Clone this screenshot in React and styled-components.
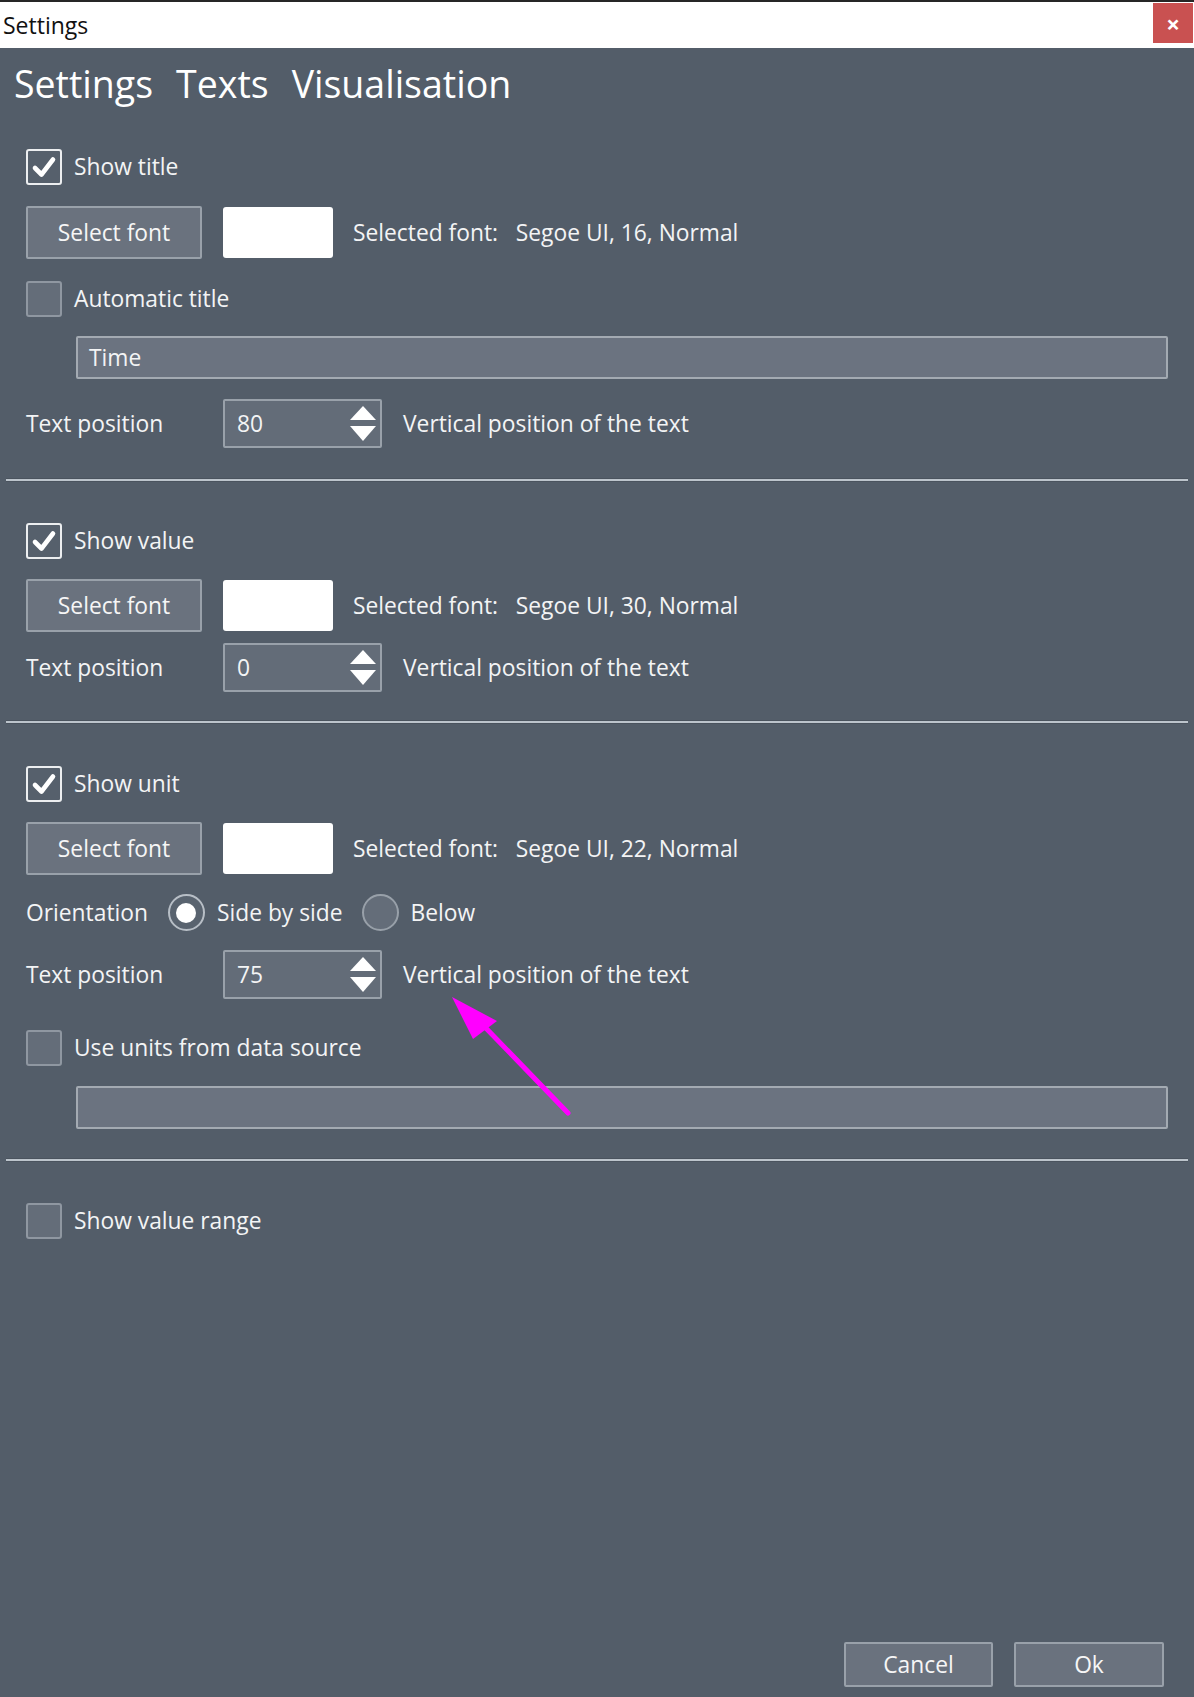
import React from "react";
import styled, { createGlobalStyle } from "styled-components";

const GlobalStyle = createGlobalStyle`
  html, body {
    margin: 0;
    padding: 0;
    background: #535d69;
  }
  body {
    font-family: "Open Sans", "Noto Sans", sans-serif;
  }
`;

const Window = styled.div`
  position: relative;
  display: flex;
  flex-direction: column;
  width: 1194px;
  min-height: 1697px;
  background: #535d69;
  color: #f3f4f5;
  font-size: 22.8px;
  box-sizing: border-box;
`;

const TitleBar = styled.div`
  display: flex;
  align-items: center;
  justify-content: space-between;
  height: 46px;
  border-top: 2px solid #262626;
  background: #ffffff;
  color: #111;
  font-size: 23px;
  padding-left: 3px;
`;

const CloseBtn = styled.div`
  display: flex;
  align-items: center;
  justify-content: center;
  width: 40px;
  height: 40px;
  margin-right: 1px;
  margin-top: -4px;
  background: #c95151;
  color: #fff;
  font-size: 24px;
  font-weight: 700;
`;

const Tabs = styled.div`
  display: flex;
  align-items: center;
  gap: 23px;
  height: 70px;
  padding-left: 14px;
  font-size: 37.5px;
  color: #ffffff;
`;

const Content = styled.div`
  display: flex;
  flex-direction: column;
  padding: 30px 6px 0;
`;

const Row = styled.div`
  display: flex;
  align-items: center;
  height: ${(p) => p.$h || 37}px;
  margin-top: ${(p) => p.$mt || 0}px;
  padding-left: 20px;
`;

const Box = styled.span`
  display: flex;
  align-items: center;
  justify-content: center;
  width: 36px;
  height: 36px;
  box-sizing: border-box;
  border-radius: 3px;
  border: 2px solid ${(p) => (p.$checked ? "#eceef0" : "#8f97a1")};
  background: ${(p) => (p.$checked ? "#56606c" : "#646d79")};
  margin-right: 12px;
`;

const Checkbox = ({ checked, label }) => (
  <>
    <Box $checked={checked}>
      {checked && (
        <svg width="26" height="26" viewBox="0 0 26 26">
          <path
            d="M4 14 L10.5 20.5 L22 5.5"
            fill="none"
            stroke="#ffffff"
            strokeWidth="4.6"
            strokeLinecap="round"
            strokeLinejoin="round"
          />
        </svg>
      )}
    </Box>
    <span>{label}</span>
  </>
);

const Button = styled.div`
  display: flex;
  align-items: center;
  justify-content: center;
  width: ${(p) => p.$w || 176}px;
  height: ${(p) => p.$h || 53}px;
  box-sizing: border-box;
  border: 2px solid #99a1aa;
  border-radius: 2px;
  background: #6a727e;
  color: #f6f6f6;
`;

const Swatch = styled.div`
  width: 110px;
  height: 51px;
  margin-left: 21px;
  border-radius: 3px;
  background: #ffffff;
`;

const FontInfo = styled.span`
  margin-left: 20px;
  white-space: pre;
`;

const TextBox = styled.div`
  display: flex;
  align-items: center;
  height: 43px;
  margin: ${(p) => p.$mt || 0}px 20px 0 70px;
  padding-left: 11px;
  box-sizing: border-box;
  border: 2px solid #a3aab2;
  border-radius: 2px;
  background: #6b7380;
`;

const Label = styled.span`
  width: 197px;
`;

const Spin = styled.div`
  display: flex;
  align-items: center;
  justify-content: space-between;
  width: 159px;
  height: 49px;
  box-sizing: border-box;
  padding: 0 4px 0 12px;
  border: 2px solid #99a1aa;
  border-radius: 2px;
  background: #636c78;
`;

const Arrows = styled.div`
  display: flex;
  flex-direction: column;
  gap: 6px;
`;

const Desc = styled.span`
  margin-left: 21px;
`;

const SpinRow = ({ value, mt }) => (
  <Row $h={49} $mt={mt}>
    <Label>Text position</Label>
    <Spin>
      <span>{value}</span>
      <Arrows>
        <svg width="26" height="14" viewBox="0 0 26 14">
          <polygon points="13,0 26,14 0,14" fill="#ffffff" />
        </svg>
        <svg width="26" height="15" viewBox="0 0 26 15">
          <polygon points="0,0 26,0 13,15" fill="#ffffff" />
        </svg>
      </Arrows>
    </Spin>
    <Desc>Vertical position of the text</Desc>
  </Row>
);

const FontRow = ({ size, mt }) => (
  <Row $h={53} $mt={mt}>
    <Button>Select font</Button>
    <Swatch />
    <FontInfo>{`Selected font:   Segoe UI, ${size}, Normal`}</FontInfo>
  </Row>
);

const Separator = styled.div`
  height: 2px;
  margin: ${(p) => p.$mt}px 0 ${(p) => p.$mb}px;
  background: #bcc4cc;
  border-top: 1px solid #4a535e;
  border-bottom: 1px solid #4a535e;
`;

const Radio = styled.span`
  display: flex;
  align-items: center;
  justify-content: center;
  width: 37px;
  height: 37px;
  box-sizing: border-box;
  border-radius: 50%;
  border: 2px solid ${(p) => (p.$checked ? "#b7bec6" : "#98a0a9")};
  background: ${(p) => (p.$checked ? "#59636f" : "#646d79")};
  margin: 0 12px 0 ${(p) => p.$ml}px;

  &::after {
    content: "";
    display: ${(p) => (p.$checked ? "block" : "none")};
    width: 20px;
    height: 20px;
    border-radius: 50%;
    background: #ffffff;
  }
`;

const Footer = styled.div`
  display: flex;
  justify-content: flex-end;
  gap: 21px;
  margin-top: auto;
  padding: 0 30px 10px 0;
`;

const Annotation = styled.svg`
  position: absolute;
  left: 0;
  top: 0;
  pointer-events: none;
`;

export default function App() {
  return (
    <>
      <GlobalStyle />
      <Window>
        <TitleBar>
          <span>Settings</span>
          <CloseBtn>×</CloseBtn>
        </TitleBar>
        <Tabs>
          <span>Settings</span>
          <span>Texts</span>
          <span>Visualisation</span>
        </Tabs>
        <Content>
          <Row>
            <Checkbox checked label="Show title" />
          </Row>
          <FontRow size={16} mt={21} />
          <Row $mt={21}>
            <Checkbox label="Automatic title" />
          </Row>
          <TextBox $mt={19}>Time</TextBox>
          <SpinRow value="80" mt={20} />
          <Separator $mt={30} $mb={40} />

          <Row>
            <Checkbox checked label="Show value" />
          </Row>
          <FontRow size={30} mt={20} />
          <SpinRow value="0" mt={11} />
          <Separator $mt={28} $mb={41} />

          <Row>
            <Checkbox checked label="Show unit" />
          </Row>
          <FontRow size={22} mt={20} />
          <Row $mt={19}>
            <span>Orientation</span>
            <Radio $checked $ml={20} />
            <span>Side by side</span>
            <Radio $ml={19} />
            <span>Below</span>
          </Row>
          <SpinRow value="75" mt={19} />
          <Row $mt={30}>
            <Checkbox label="Use units from data source" />
          </Row>
          <TextBox $mt={20} />
          <Separator $mt={29} $mb={40} />

          <Row>
            <Checkbox label="Show value range" />
          </Row>
        </Content>
        <Footer>
          <Button $w={149} $h={45}>Cancel</Button>
          <Button $w={150} $h={45}>Ok</Button>
        </Footer>
        <Annotation width="1194" height="1697" viewBox="0 0 1194 1697">
          <line x1="568" y1="1113" x2="480" y2="1022" stroke="#ff00ff" strokeWidth="5" strokeLinecap="round" />
          <polygon points="452,997 497,1021 473,1039" fill="#ff00ff" />
        </Annotation>
      </Window>
    </>
  );
}
